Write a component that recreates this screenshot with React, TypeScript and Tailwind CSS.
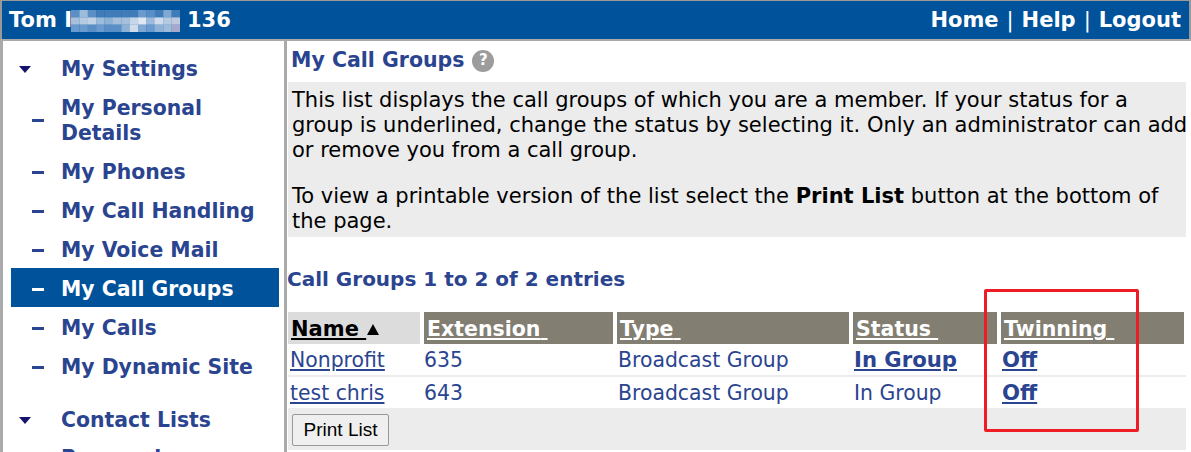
const blurColors = [
  ["#5a8fc6", "#9dbcdc", "#5a8fc6", "#3f7cb9", "#3f7cb9", "#3f7cb9", "#3f7cb9", "#3f7cb9", "#6a9ace", "#5a8fc6", "#3f7cb9", "#7fa8d2", "#3f7cb9"],
  ["#a6c0dc", "#b6cbe2", "#c0d2e6", "#9dbcdc", "#8eb1d6", "#a6c0dc", "#a6c0dc", "#c6d6e8", "#e0e8f2", "#9dbcdc", "#d0dcec", "#b6cbe2", "#c0c8de"],
  ["#6a9ace", "#6a9ace", "#5a8fc6", "#6a9ace", "#5a8fc6", "#5a8fc6", "#8eb1d6", "#d0dcec", "#7fa8d2", "#6a9ace", "#8eb1d6", "#9dbcdc", "#a6a8cc"],
];

const menu = [
  { label: "My Personal Details", two: true },
  { label: "My Phones" },
  { label: "My Call Handling" },
  { label: "My Voice Mail" },
  { label: "My Call Groups", active: true },
  { label: "My Calls" },
  { label: "My Dynamic Site" },
];

const Caret = () => (
  <svg width="12" height="7" viewBox="0 0 12 7" className="text-[#14146e]">
    <path d="M0 0h12L6 7z" fill="currentColor" />
  </svg>
);

const App = () => {
  return (
    <div className="h-[452px] w-[1191px] overflow-hidden bg-white font-['DejaVu_Sans',Verdana,sans-serif] relative">
      <div className="h-[39px] bg-[#00529b] border-t border-x-2 border-[#999] flex items-center justify-between pl-[7px] pr-[8px] pt-[2px] text-white font-bold text-[21px]">
        <div className="flex items-center">
          <span>Tom I</span>
          <svg width="109" height="22" viewBox="0 0 13 3" preserveAspectRatio="none" className="ml-[-1px] mr-[7px]">
            {blurColors.map((row, y) => row.map((c, x) => <rect key={x + "-" + y} x={x} y={y} width="1.02" height="1.02" fill={c} />))}
          </svg>
          <span>136</span>
        </div>
        <div className="flex items-center">
          <span>Home</span>
          <span className="font-normal mx-[8px]">|</span>
          <span>Help</span>
          <span className="font-normal mx-[8px]">|</span>
          <span>Logout</span>
        </div>
      </div>

      <div className="flex h-[413px] border-t-2 border-[#aaa]">
        <div className="w-[287px] shrink-0 border-l-[3px] border-r-[3px] border-[#aaa] pl-[8px] pr-[5px] pt-[7px] text-[20.4px] font-bold leading-[25px]">
          <div className="flex items-center h-[39px] pt-[3px]">
            <div className="w-[50px] pl-[8px]"><Caret /></div>
            <span className="text-[#2a4490]">My Settings</span>
          </div>
          {menu.map((m) => (
            <div
              key={m.label}
              className={`flex items-center pt-[3px] ${m.two ? "h-[64px]" : "h-[39px]"} ${m.active ? "bg-[#00529b]" : ""}`}
            >
              <div className="w-[50px] pl-[21px]">
                <div className={`h-[3px] w-[12px] ${m.active ? "bg-white" : "bg-[#2a4490]"}`} />
              </div>
              <span className={`w-[200px] ${m.active ? "text-white" : "text-[#2a4490]"}`}>{m.label}</span>
            </div>
          ))}
          <div className="flex items-center h-[39px] mt-[14px] pt-[3px]">
            <div className="w-[50px] pl-[8px]"><Caret /></div>
            <span className="text-[#2a4490]">Contact Lists</span>
          </div>
          <div className="flex items-center h-[39px] mt-[-1px] pt-[3px]">
            <div className="w-[50px]" />
            <span className="text-[#2a4490]">Personal</span>
          </div>
        </div>

        <div className="flex-1 pr-[5px] pl-[1px]">
          <div className="h-[41px] flex items-center pl-[3px] pb-[2px] gap-[8px]">
            <span className="font-bold text-[20.5px] text-[#2a4490]">My Call Groups</span>
            <span className="w-[22px] h-[22px] rounded-full bg-[#9c9c9c] text-white font-bold text-[15px] flex items-center justify-center">?</span>
          </div>
          <div className="bg-[#ececec] pl-[4px] pt-[6px] text-[21px] leading-[25px] text-black h-[155px]">
            <p className="mb-[21px] mr-[-4px]">
              This list displays the call groups of which you are a member. If your status for a group is underlined, change the status by selecting it. Only an administrator can add or remove you from a call group.
            </p>
            <p>
              To view a printable version of the list select the <b>Print List</b> button at the bottom of the page.
            </p>
          </div>
          <div className="font-bold text-[20px] text-[#2a4490] mt-[27px] h-[48px] ml-[-1px]">Call Groups 1 to 2 of 2 entries</div>

          <div className="grid grid-cols-[132px_189px_232px_144px_183px] gap-x-[4px]">
            <div className="h-[32px] bg-[#dcdcdc] pl-[3px] pt-[3px] font-bold text-[21px] text-black flex items-center gap-[1px]">
              <span className="underline">Name&nbsp;</span>
              <svg width="12" height="11" viewBox="0 0 12 11"><path d="M6 0L12 11H0z" fill="#000" /></svg>
            </div>
            {["Extension", "Type", "Status", "Twinning"].map((h) => (
              <div key={h} className="h-[32px] bg-[#827e72] pl-[3px] pt-[3px] font-bold text-[20.5px] text-white flex items-center">
                <span className="underline">{h}&nbsp;</span>
              </div>
            ))}
          </div>
          <div className="grid grid-cols-[136px_194px_236px_148px_1fr] h-[33px] items-center border-b-[2px] border-[#ececec] text-[20.4px] text-[#2a4490]">
            <span className="underline pl-[2px]">Nonprofit</span>
            <span>635</span>
            <span>Broadcast Group</span>
            <span className="font-bold text-[21.2px] underline">In Group</span>
            <span className="font-bold text-[21.2px] underline">Off</span>
          </div>
          <div className="grid grid-cols-[136px_194px_236px_148px_1fr] h-[31px] items-center text-[20.4px] text-[#2a4490]">
            <span className="underline pl-[2px]">test chris</span>
            <span>643</span>
            <span>Broadcast Group</span>
            <span>In Group</span>
            <span className="font-bold text-[21.2px] underline">Off</span>
          </div>
          <div className="bg-[#ececec] h-[42px] pl-[4px] pt-[6px]">
            <button className="h-[32px] w-[97px] rounded-[2px] border border-[#999] bg-[#efefef] text-[19px] text-black font-['Liberation_Sans',Arial,sans-serif]">
              Print List
            </button>
          </div>
        </div>
      </div>

      <div className="absolute left-[984px] top-[289px] w-[155px] h-[143px] border-[3px] border-[#ee1c25] rounded-[2px]" />
    </div>
  );
};

export default App;
